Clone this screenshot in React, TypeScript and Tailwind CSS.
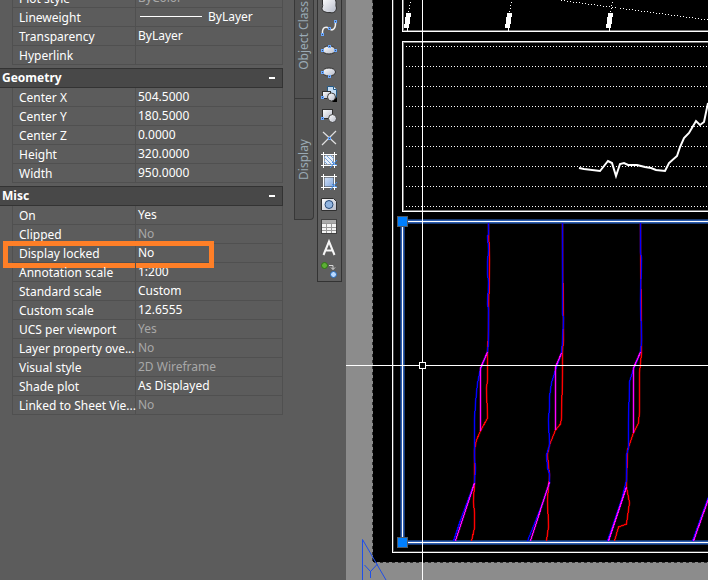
import { useState } from "react";

type Row = {
  label: string;
  value: string;
  readOnly?: boolean;
  line?: boolean;
};

const general: Row[] = [
  { label: "Plot style", value: "ByColor", readOnly: true },
  { label: "Lineweight", value: "ByLayer", line: true },
  { label: "Transparency", value: "ByLayer" },
  { label: "Hyperlink", value: "" },
];

const geometry: Row[] = [
  { label: "Center X", value: "504.5000" },
  { label: "Center Y", value: "180.5000" },
  { label: "Center Z", value: "0.0000" },
  { label: "Height", value: "320.0000" },
  { label: "Width", value: "950.0000" },
];

const misc: Row[] = [
  { label: "On", value: "Yes" },
  { label: "Clipped", value: "No", readOnly: true },
  { label: "Display locked", value: "No" },
  { label: "Annotation scale", value: "1:200" },
  { label: "Standard scale", value: "Custom" },
  { label: "Custom scale", value: "12.6555" },
  { label: "UCS per viewport", value: "Yes", readOnly: true },
  { label: "Layer property ove...", value: "No", readOnly: true },
  { label: "Visual style", value: "2D Wireframe", readOnly: true },
  { label: "Shade plot", value: "As Displayed" },
  { label: "Linked to Sheet Vie...", value: "No", readOnly: true },
];

function PropertyTable({ name, rows }: { name: string; rows: Row[] }) {
  return (
    <table
      aria-label={name}
      className="ml-3 w-[271px] table-fixed border-separate border-spacing-0 border-l border-[#505050]"
    >
      <tbody>
        {rows.map((row) => (
          <tr key={row.label} className="h-[19px]">
            <th
              scope="row"
              className="relative w-[123px] border-r border-b border-[#505050] p-0 pl-[6px] text-left font-normal whitespace-nowrap"
            >
              <span className="block h-[18px] pt-[2px] leading-4">
                {row.label}
              </span>
              {row.label === "Display locked" && (
                <span className="pointer-events-none absolute -top-[3px] -left-[10px] h-[27px] w-[211px] border-5 border-[#ff7f27]" />
              )}
            </th>
            <td
              className={
                row.readOnly
                  ? "border-r border-b border-[#505050] p-0 pl-[2px] text-[#a8a8a8]"
                  : "border-r border-b border-[#505050] p-0 pl-[2px]"
              }
            >
              <span className="flex h-[18px] items-center gap-[6px] pb-[1px] leading-4">
                {row.line && <i className="ml-[2px] h-px w-[62px] bg-white" />}
                {row.value}
              </span>
            </td>
          </tr>
        ))}
      </tbody>
    </table>
  );
}

function Section({ title, rows }: { title: string; rows: Row[] }) {
  const [open, setOpen] = useState(true);

  return (
    <section className="mt-[3px]">
      <button
        aria-expanded={open}
        onClick={() => setOpen(!open)}
        className="flex h-5 w-[283px] items-center justify-between border-y border-r border-[#333333] bg-[#484848] pr-[7px] pl-[2px] text-[12px] leading-4 font-bold"
      >
        {title}
        <i className="h-[2px] w-[6px] bg-white" />
      </button>
      {open && <PropertyTable name={title} rows={rows} />}
    </section>
  );
}

function Grip({ x, y }: { x: number; y: number }) {
  return (
    <rect x={x - 1} y={y - 1} width="2" height="2" fill="#3d4f6b" stroke="#6aa8ff" />
  );
}

const tools = [
  {
    name: "Region",
    icon: (
      <path
        d="M4.5 5C5 3 8 5 10 4C13 3 16 4 17.500 5C19 8 17 10 18.500 13C18 17 15 18.500 12 17.500C9 18 7 17 4.500 15.500C3 13 5.500 11 4.500 9Z"
        fill="url(#metal)"
        stroke="#303030"
      />
    ),
  },
  {
    name: "Spline",
    icon: (
      <>
        <path
          d="M4.500 17C4 10 8 9 11 11.500C15 15 18 11 17.500 5"
          fill="none"
          stroke="#f0f0f0"
          strokeWidth="1.5"
        />
        <Grip x={4.5} y={17.5} />
        <Grip x={11.5} y={11.5} />
        <Grip x={17.5} y={4.5} />
      </>
    ),
  },
  {
    name: "Ellipse",
    icon: (
      <>
        <ellipse cx="11" cy="11" rx="6.500" ry="4" fill="url(#metal)" stroke="#303030" />
        <Grip x={4.5} y={11.5} />
        <Grip x={11.5} y={7.5} />
        <Grip x={17.5} y={11.5} />
      </>
    ),
  },
  {
    name: "Ellipse arc",
    icon: (
      <>
        <ellipse cx="11" cy="11" rx="6.500" ry="4" fill="url(#metal)" stroke="#303030" />
        <Grip x={4.5} y={11.5} />
        <Grip x={11.5} y={15.5} />
      </>
    ),
  },
  {
    name: "Insert block",
    icon: (
      <>
        <path d="M9.500 3.500h6l3 3v8h-9z" fill="#c4dcf3" stroke="#245984" />
        <path d="M15.500 3.500v3h3" fill="#fff" stroke="#245984" />
        <rect x="4.5" y="8.5" width="8" height="7" fill="url(#metal)" stroke="#303030" />
        <circle cx="13.5" cy="14" r="4" fill="url(#metal)" stroke="#404040" />
        <Grip x={4.5} y={14.5} />
        <path d="M19 14v5h-5z" fill="#000" />
      </>
    ),
  },
  {
    name: "Make block",
    icon: (
      <>
        <rect x="4.5" y="4.5" width="10" height="9" fill="url(#metal)" stroke="#303030" />
        <circle cx="14.5" cy="13.5" r="4" fill="url(#metal)" stroke="#404040" />
        <Grip x={4.5} y={13.5} />
      </>
    ),
  },
  {
    name: "Point",
    icon: (
      <>
        <path d="M5 5l13 12M18 4L4 18" stroke="#e0e0e0" strokeWidth="1.2" />
        <Grip x={11.5} y={11.5} />
      </>
    ),
  },
  {
    name: "Hatch",
    icon: (
      <>
        <rect x="6" y="6" width="10" height="10" fill="#e8f0fa" stroke="#3c3c3c" />
        <path d="M6 8l8 8M6 12l4 4M8 6l8 8M12 6l4 4" stroke="#7ca6dc" />
        <path d="M5.500 3v16M16.500 3v16M3 5.500h16M3 16.500h16" stroke="#fff" />
        <path d="M12 19l7-8M14 13l2 2 3 1" stroke="#3b8cf0" fill="none" />
      </>
    ),
  },
  {
    name: "Gradient",
    icon: (
      <>
        <rect x="6" y="6" width="10" height="10" fill="url(#sky)" stroke="#3c3c3c" />
        <path d="M5.500 3v16M16.500 3v16M3 5.500h16M3 16.500h16" stroke="#fff" />
        <path d="M12 19l7-8M14 13l2 2 3 1" stroke="#3b8cf0" fill="none" />
      </>
    ),
  },
  {
    name: "Boundary",
    icon: (
      <>
        <path d="M3.500 5.500h12l3 3v9h-15z" fill="url(#metal)" stroke="#303030" />
        <circle cx="11" cy="11.5" r="4" fill="#91b4df" stroke="#294a77" />
      </>
    ),
  },
  {
    name: "Table",
    icon: (
      <>
        <rect x="3.5" y="4.5" width="15" height="14" fill="#f4f4f4" stroke="#404040" />
        <path d="M4 5h14v3H4z" fill="#aaa" />
        <path d="M8.500 8v10M13.500 8v10M4 8.500h14M4 12.500h14M4 15.500h14" stroke="#999" />
      </>
    ),
  },
  {
    name: "Multiline text",
    icon: (
      <path
        d="M5.500 18L11 4.500L16.500 18M7.500 13.500h7"
        fill="none"
        stroke="#f6f6f6"
        strokeWidth="2"
      />
    ),
  },
  {
    name: "Add selected",
    icon: (
      <>
        <circle cx="6.5" cy="6.5" r="3" fill="#5daf36" stroke="#2e7414" />
        <circle cx="15.5" cy="15.5" r="3" fill="#b9d9ff" stroke="#2468b6" />
        <path d="M11 6.500h4v4M13 8.500l2 2 2-2" fill="none" stroke="#d8d8d8" />
      </>
    ),
  },
];

function Toolbar() {
  return (
    <div
      role="toolbar"
      aria-label="Draw"
      className="-mt-[5px] ml-[3px] flex w-[25px] shrink-0 flex-col items-start self-start border border-t-0 border-[#333333] bg-[#5f5f5f]"
    >
      {tools.map((tool) => (
        <button key={tool.name} aria-label={tool.name} className="block">
          <svg width="22" height="22" viewBox="0 0 22 22">
            {tool.icon}
          </svg>
        </button>
      ))}
    </div>
  );
}

const gridRows = [46, 66, 86, 106, 126, 146, 166, 186, 206];

const magentaLines = [
  "487,352 480,368 480,431",
  "474,483 455,541",
  "561,353 555,367 555,430",
  "549,482 530,541",
  "640,352 633,368 633,433",
  "626,487 608,541",
  "708,499 693,541",
];

const blueLines = [
  "488,223 488,234 487,236 488,250 487,262 487,274 488,282 487,304 488,310 488,343 487,352 480,369 477,383 475,403 474,420 474,457 475,468 474,483 460,520 453,541",
  "562,223 562,314 563,318 562,340 561,353 555,370 551,383 549,397 549,407 548,420 549,445 546,455 547,468 549,474 549,483 541,506 527,541",
  "640,223 640,252 641,258 640,300 641,340 640,352 633,369 629,382 628,423 628,448 626,455 626,480 621,500 607,541",
  "708,497 692,541",
];

const redLines = [
  "488,223 489,260 488,330 487,353 487,380 486,388 487,418 480,431 476,440 474,450 474,483 473,502 474,513 474,528 471,541",
  "562,223 563,340 562,353 562,373 561,418 560,424 555,430 549,445 547,455 549,475 548,487 547,500 548,527 546,541",
  "640,223 641,353 639,373 639,412 638,423 633,433 627,450 626,487 629,503 626,524 618,527 614,541",
];

function Trace({ points, color }: { points: string; color: string }) {
  return (
    <>
      <polyline points={points} stroke={color} strokeWidth="2" strokeOpacity="0.45" shapeRendering="auto" />
      <polyline points={points} stroke={color} />
    </>
  );
}

function Drawing() {
  return (
    <svg
      role="img"
      aria-label="Paper space layout"
      className="absolute inset-0 h-full w-full"
    >
      <g transform="translate(-346 0)" fill="none" shapeRendering="crispEdges">
        <path d="M373 0H3000V562H373Z" fill="#000" />
        <path d="M372.500 0V562.500H3000" stroke="#333" strokeDasharray="3 3" />

        <path d="M393.500 0V551.500H3000" stroke="#444" />
        <path d="M392.500 0V552.500H3000" stroke="#fff" />
        <path d="M403.500 0V30.500H3000M3000 42.500H403.500V210.500H3000" stroke="#777" />
        <path d="M402.500 0V31.500H3000M3000 41.500H402.500V211.500H3000" stroke="#fff" />

        {gridRows.map((y) => (
          <path key={y} d={`M406 ${y + 0.5}H3000`} stroke="#fff" strokeDasharray="1 2" />
        ))}

        <path
          d="M410.500 2L408.500 12M511.500 2L509.500 12M612.500 2L610.500 12M561 0.500L708 20"
          stroke="#fff"
          strokeDasharray="1 2"
        />
        {[406, 507, 608].map((x) => (
          <path
            key={x}
            d={`M${x} 13h5l-1 8-1 7h-1v3h-1v-3h-3v-1l1-5z`}
            fill="#fff"
          />
        ))}

        <polyline
          points="579,168 584,169 600,171 604,166 608,161 612,163 616,176 620,164 624,163 628,165 637,165 645,167 651,168 656,170 665,171 669,163 677,156 680,147 684,138 689,133 696,121 700,125 704,122 708,103"
          stroke="#fff"
          strokeWidth="2"
          shapeRendering="auto"
        />

        <path d="M3000 221.500H402.500V542.500H3000" stroke="#17376e" strokeWidth="5" />
        <path d="M3000 221.500H402.500V542.500H3000" stroke="#2c5cae" strokeWidth="3" />
        <path d="M3000 221.500H402.500V542.500H3000" stroke="#fff" />

        <g transform="translate(0.500 0)">
          {redLines.map((points) => (
            <Trace key={points} points={points} color="#f00" />
          ))}
          {blueLines.map((points) => (
            <Trace key={points} points={points} color="#00f" />
          ))}
          {magentaLines.map((points) => (
            <Trace key={points} points={points} color="#f0f" />
          ))}
        </g>

        <path
          d="M362.500 580V539.500L386 580M364.500 565L370.500 571.500L377.500 564M370.500 571V578"
          stroke="#1f4fe8"
          shapeRendering="auto"
        />

        <path d="M422.500 0V362M422.500 369V3000M346 365.500H419M426 365.500H3000" stroke="#fff" />
        <rect x="419.5" y="362.5" width="6" height="6" stroke="#fff" />

        <rect x="397.5" y="216.5" width="10" height="10" fill="#007fff" stroke="#4d5a68" />
        <rect x="397.5" y="537.5" width="10" height="10" fill="#007fff" stroke="#4d5a68" />
      </g>
    </svg>
  );
}

const App = () => {
  return (
    <div className="flex h-screen overflow-hidden bg-[#5c5c5c] font-['Noto_Sans',sans-serif] text-[12px] text-white">
      <svg className="absolute h-0 w-0" aria-hidden="true">
        <defs>
          <linearGradient id="metal" x2="1" y2="1">
            <stop stopColor="#fff" />
            <stop offset="1" stopColor="#b5bac8" />
          </linearGradient>
          <linearGradient id="sky" x2="1" y2="1">
            <stop stopColor="#d5e2f7" />
            <stop offset="1" stopColor="#7fa5dc" />
          </linearGradient>
        </defs>
      </svg>

      <aside className="-mt-[11px] w-[294px] shrink-0">
        <PropertyTable name="General" rows={general} />
        <Section title="Geometry" rows={geometry} />
        <Section title="Misc" rows={misc} />
      </aside>

      <nav
        aria-label="Palette tabs"
        className="flex h-[220px] w-5 shrink-0 flex-col rounded-br border-x border-b border-[#383838] bg-[#525252] text-[#9aaab5]"
      >
        <button className="flex h-[99px] items-end justify-center border-b border-[#383838] pb-7 leading-4">
          <span className="rotate-180 whitespace-nowrap [writing-mode:vertical-rl]">
            Object Class
          </span>
        </button>
        <button className="flex flex-1 items-center justify-center leading-4">
          <span className="rotate-180 [writing-mode:vertical-rl]">Display</span>
        </button>
      </nav>

      <Toolbar />

      <main className="relative ml-1 min-w-0 flex-1 bg-[#8c8c8c]">
        <Drawing />
      </main>
    </div>
  );
};

export default App;
